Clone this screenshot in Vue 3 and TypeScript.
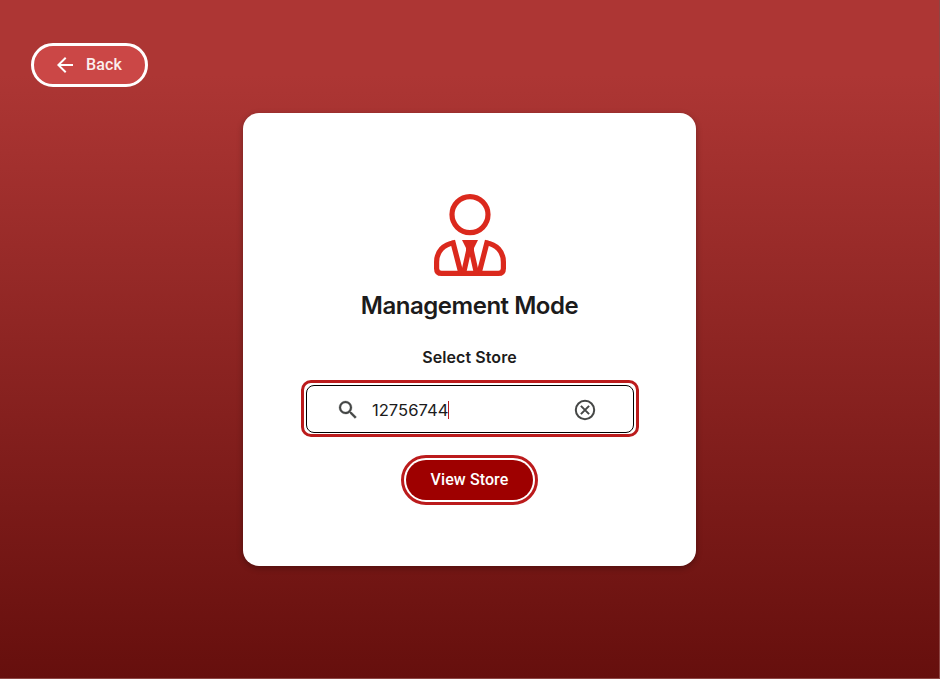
<script setup lang="ts">
import { ref } from 'vue'

const storeNumber = ref<string>('12756744')

function clearStore(): void {
  storeNumber.value = ''
}
</script>

<template>
  <main class="page">
    <button class="back" type="button">
      <svg class="back-icon" viewBox="0 0 24 24" aria-hidden="true">
        <path d="M20 11H7.83l5.59-5.59L12 4l-8 8 8 8 1.41-1.41L7.83 13H20z" fill="#fff" />
      </svg>
      <span>Back</span>
    </button>

    <section class="card">
      <svg class="manager" viewBox="0 0 72 82" aria-hidden="true">
        <g fill="none" stroke="#db291d" stroke-width="5.2">
          <circle cx="36" cy="20.6" r="18" />
          <path d="M20 48.8C9.5 50.4 2.6 57.5 2.6 68V74.4Q2.6 79.4 7.6 79.4H64.4Q69.4 79.4 69.4 74.4V68C69.4 57.5 62.5 50.4 52 48.8" />
          <path d="M18.5 46.5L27 79.5M53.5 46.5L45 79.5" />
          <path d="M35 55L29.5 79.5M37 55L42.5 79.5" />
        </g>
        <path d="M28 46H44L40 54V59H32V54Z" fill="#db291d" />
      </svg>
      <h1 class="title">Management Mode</h1>
      <label class="label">Select Store</label>
      <div class="focus-ring">
        <div class="field">
          <svg class="search" viewBox="0 0 24 24" aria-hidden="true">
            <path d="M15.5 14h-.79l-.28-.27A6.47 6.47 0 0 0 16 9.5 6.5 6.5 0 1 0 9.5 16c1.61 0 3.09-.59 4.23-1.57l.27.28v.79l5 4.99L20.49 19zm-6 0a4.5 4.5 0 1 1 0-9 4.5 4.5 0 0 1 0 9z" fill="#454746" stroke="#454746" stroke-width="0.3" />
          </svg>
          <span class="value">{{ storeNumber }}</span>
          <span class="caret"></span>
          <button class="clear" type="button" aria-label="Clear" @click="clearStore">
            <svg viewBox="0 0 22 22" fill="none" stroke="#454746" stroke-width="2" aria-hidden="true">
              <circle cx="11" cy="11" r="9.2" />
              <path d="M6.9 6.9L15.1 15.1M15.1 6.9L6.9 15.1" />
            </svg>
          </button>
        </div>
      </div>
      <div class="view-ring">
        <button class="view" type="button">View Store</button>
      </div>
    </section>
  </main>
</template>

<style>
body {
  margin: 0;
}
</style>

<style scoped>
* {
  box-sizing: border-box;
}

button {
  margin: 0;
  font: 500 16px/24px Roboto, sans-serif;
  color: #fff;
}

.page {
  width: 940px;
  height: 679px;
  overflow: hidden;
  display: flex;
  flex-direction: column;
  align-items: flex-start;
  padding: 43px 0 0 31px;
  border-right: 1px solid #8d4644;
  border-bottom: 1px solid #8d4644;
  background: linear-gradient(180deg, #ad3634 0, #ad3634 75px, #660f0d 100%);
}

.back {
  display: flex;
  align-items: center;
  flex: none;
  width: 117px;
  height: 44px;
  padding: 0 0 0 21px;
  border: 3px solid #fff;
  border-radius: 22px;
  background: #cb4746;
  color: #fbeeee;
  letter-spacing: 0.15px;
}

.back-icon {
  width: 24px;
  height: 24px;
  margin-left: -2px;
  margin-right: 9px;
}

.card {
  display: flex;
  flex-direction: column;
  align-items: center;
  flex: none;
  width: 453px;
  height: 453px;
  margin: 26px 0 0 212px;
  padding-top: 81px;
  border-radius: 16px;
  background: #fff;
  box-shadow: 0 2px 6px rgba(0, 0, 0, 0.3);
}

.manager {
  flex: none;
  width: 72px;
  height: 82px;
}

.title {
  margin: 14px 0 0;
  font: 600 24px/32px Inter, sans-serif;
  letter-spacing: -0.48px;
  color: #1c1b1b;
}

.label {
  margin-top: 23px;
  font: 600 16px/24px Inter, sans-serif;
  letter-spacing: 0.09px;
  color: #1c1b1b;
}

.focus-ring {
  flex: none;
  width: 338px;
  height: 57px;
  margin-top: 11px;
  padding: 2px;
  border: 3px solid #bb1b1c;
  border-radius: 10px;
}

.field {
  display: flex;
  align-items: center;
  width: 100%;
  height: 48px;
  padding: 2px 37px 0 29px;
  border: 1px solid #000;
  border-radius: 8px;
}

.search {
  flex: none;
  width: 24px;
  height: 24px;
}

.value {
  margin-left: 12px;
  margin-right: 6px;
  padding-top: 2px;
  font: 400 15.3px/24px Inter, sans-serif;
  color: #1c1b1b;
  transform: scaleX(1.085);
  transform-origin: 0 50%;
}

.caret {
  width: 1.5px;
  height: 18px;
  background: #bb1b1c;
}

.clear {
  width: 22px;
  height: 22px;
  margin-left: auto;
  padding: 0;
  border: 0;
  background: none;
}

.clear svg {
  display: block;
  width: 22px;
  height: 22px;
}

.view-ring {
  flex: none;
  width: 137px;
  height: 50px;
  margin-top: 18px;
  padding: 2px;
  border: 3px solid #bb1b1c;
  border-radius: 25px;
}

.view {
  width: 100%;
  height: 40px;
  padding: 0;
  border: 0;
  border-radius: 20px;
  background: #9e0000;
  letter-spacing: 0.1px;
}
</style>
